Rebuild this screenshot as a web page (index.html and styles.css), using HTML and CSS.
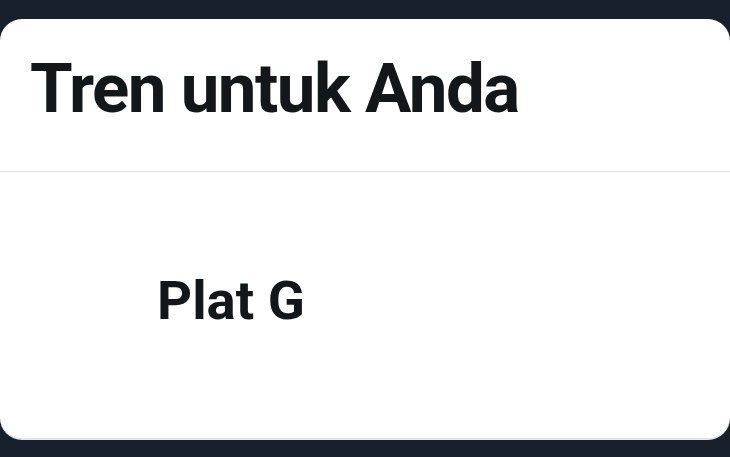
FILE: index.html
```html
<!DOCTYPE html>
<html lang="id">
<head>
<meta charset="utf-8">
<title>Tren untuk Anda</title>
<link rel="stylesheet" href="styles.css">
</head>
<body>
<section class="card">
  <header class="card-header">
    <h2 class="title">Tren untuk Anda</h2>
  </header>
  <div class="trend">
    <span class="trend-name">Plat G</span>
  </div>
</section>
</body>
</html>
```
FILE: styles.css
```css
html, body {
  margin: 0;
  padding: 0;
  background: #17202b;
  height: 100%;
}
body {
  font-family: Roboto, "Liberation Sans", sans-serif;
  color: #14171a;
  padding-top: 19px;
  box-sizing: border-box;
}
.card {
  background: #ffffff;
  border-radius: 22px;
  height: 421px;
  box-sizing: border-box;
  border-bottom: 2px solid #e3e6e9;
  overflow: hidden;
}
.card-header {
  height: 153px;
  box-sizing: border-box;
  border-bottom: 1px solid #dde2e6;
  padding: 29px 0 0 30px;
}
.title {
  margin: 0;
  font-size: 69px;
  line-height: 81px;
  font-weight: 700;
  letter-spacing: -1.5px;
}
.trend {
  padding: 96px 0 0 157px;
}
.trend-name {
  display: block;
  font-size: 54.5px;
  line-height: 64px;
  font-weight: 700;
}
```
